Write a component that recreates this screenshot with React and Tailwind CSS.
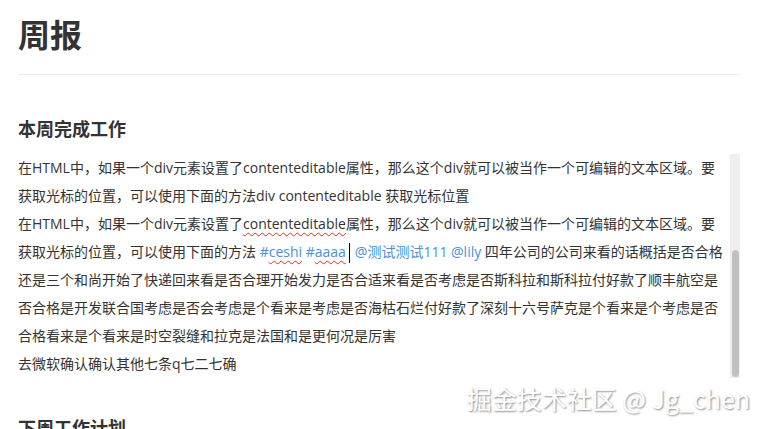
import React from 'react';

const Wavy = ({ children }) => (
  <span className="underline decoration-wavy decoration-[#e0312b] decoration-1 underline-offset-[3px]">
    {children}
  </span>
);

const Tag = ({ children }) => <span className="text-[#4a8fe0]">{children}</span>;

const App = () => {
  const lines = [
    '在HTML中，如果一个div元素设置了contenteditable属性，那么这个div就可以被当作一个可编辑的文本区域。要',
    '获取光标的位置，可以使用下面的方法div contenteditable 获取光标位置',
    <>
      在HTML中，如果一个div元素设置了<Wavy>contenteditable</Wavy>属性，那么这个div就可以被当作一个可编辑的文本区域。要
    </>,
    <>
      获取光标的位置，可以使用下面的方法{' '}
      <Tag>
        #<Wavy>ceshi</Wavy> #<Wavy>aaaa</Wavy>
      </Tag>
      <span className="inline-block w-[1px] h-[20px] bg-black align-middle ml-[3px] mr-[5px]" />
      <Tag>@测试测试111 @lily</Tag> 四年公司的公司来看的话概括是否合格
    </>,
    '还是三个和尚开始了快递回来看是否合理开始发力是否合适来看是否考虑是否斯科拉和斯科拉付好款了顺丰航空是',
    '否合格是开发联合国考虑是否会考虑是个看来是考虑是否海枯石烂付好款了深刻十六号萨克是个看来是个考虑是否',
    '合格看来是个看来是时空裂缝和拉克是法国和是更何况是厉害',
    '去微软确认确认其他七条q七二七确',
  ];

  return (
    <div className="relative h-[429px] overflow-hidden bg-white text-[#333] font-['Open_Sans','Noto_Sans_CJK_SC',sans-serif]">
      <div className="w-[722px] ml-[18px] pt-[15px]">
        <h1 className="text-[32px] leading-[40px] font-bold text-[#333]">周报</h1>
        <div className="mt-[19px] border-t border-[#eeeeee]" />

        <h2 className="mt-[40px] text-[18px] leading-[28px] font-bold text-[#333]">本周完成工作</h2>

        <div className="mt-[11px] flex h-[224px]">
          <div className="flex-1 text-[14px] leading-[28px] whitespace-nowrap">
            {lines.map((l, i) => (
              <div key={i}>{l}</div>
            ))}
          </div>
          <div className="w-[10px] bg-[#efefef] flex flex-col justify-end items-center pb-[1px]">
            <div className="w-[7px] h-[127px] rounded-full bg-[#c1c1c1]" />
          </div>
        </div>

        <h2 className="mt-[36px] text-[18px] leading-[28px] font-bold text-[#333]">下周工作计划</h2>
      </div>

      <div className="absolute right-[17px] bottom-[16px] text-[25px] leading-[30px] text-white font-['Noto_Sans_CJK_SC',sans-serif] [text-shadow:1px_1px_2px_#8a8a8a]">
        掘金技术社区 @ Jg_chen
      </div>
    </div>
  );
};

export default App;
